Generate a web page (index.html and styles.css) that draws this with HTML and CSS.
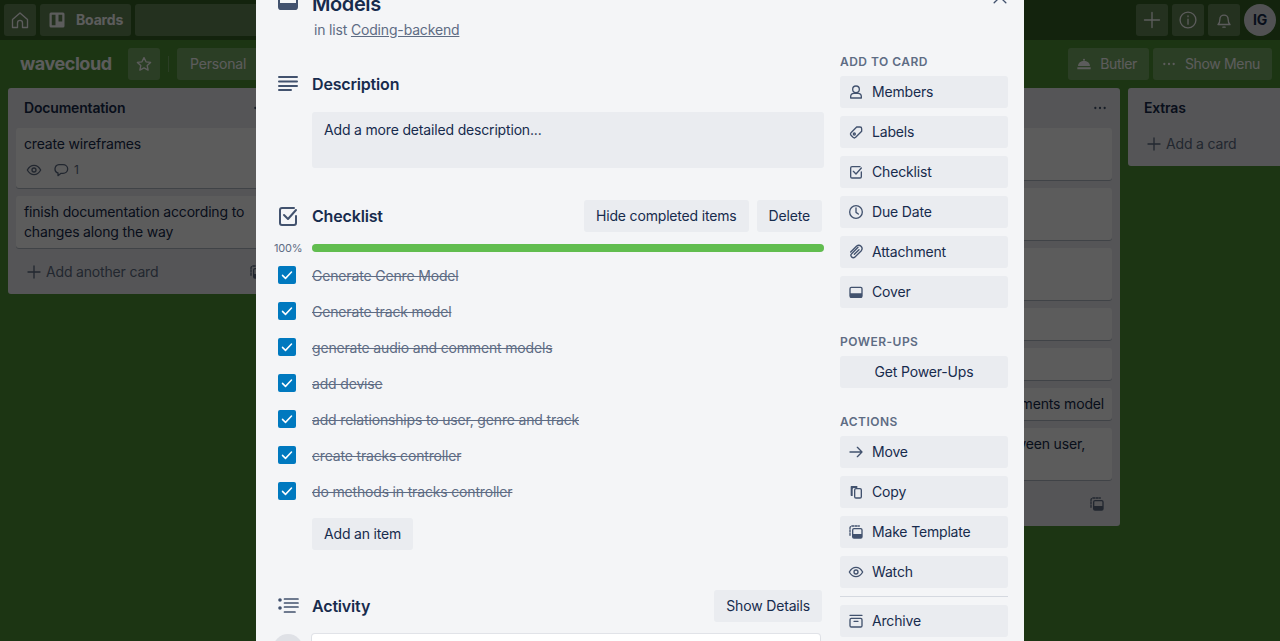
FILE: index.html
```html
<!DOCTYPE html>
<html lang="en">
<head>
    <meta charset="UTF-8">
    <title>Models on wavecloud</title>
    <link rel="stylesheet" href="styles.css">
</head>
<body>
    <svg class="sprite" xmlns="http://www.w3.org/2000/svg">
        <symbol id="i-home" viewBox="0 0 24 24"><path d="M3 11.500 12 3.500l9 8V21h-6v-5.500a3 3 0 0 0-6 0V21H3z"/></symbol>
        <symbol id="i-boards" viewBox="0 0 24 24"><path class="solid" fill-rule="evenodd" d="M4 2h16a2 2 0 0 1 2 2v16a2 2 0 0 1-2 2H4a2 2 0 0 1-2-2V4a2 2 0 0 1 2-2zm1 3v14h5V5zm9 0v9h5V5z"/></symbol>
        <symbol id="i-star" viewBox="0 0 24 24"><path d="M12 3.500l2.700 5.600 6.100.8-4.500 4.200 1.200 6.100-5.500-3-5.500 3 1.200-6.100-4.500-4.200 6.100-.8z"/></symbol>
        <symbol id="i-plus" viewBox="0 0 24 24"><path d="M12 3v18M3 12h18"/></symbol>
        <symbol id="i-info" viewBox="0 0 24 24"><circle cx="12" cy="12" r="9.500"/><path d="M12 11v6M12 7v1"/></symbol>
        <symbol id="i-bell" viewBox="0 0 24 24"><path d="M4 18c2-1.500 2.500-3 2.500-7a5.500 5.500 0 0 1 11 0c0 4 .5 5.500 2.500 7zM10.500 21.500h3"/></symbol>
        <symbol id="i-butler" viewBox="0 0 24 24"><path class="solid" d="M3 15a9 8 0 0 1 18 0zM2 17h20v3H2z"/><circle class="solid" cx="12" cy="5.500" r="1.500"/></symbol>
        <symbol id="i-dots" viewBox="0 0 24 24"><circle class="solid" cx="5" cy="12" r="1.700"/><circle class="solid" cx="12" cy="12" r="1.700"/><circle class="solid" cx="19" cy="12" r="1.700"/></symbol>
        <symbol id="i-eye" viewBox="0 0 24 24"><path d="M2 12c2.500-4.500 6-7 10-7s7.500 2.500 10 7c-2.500 4.500-6 7-10 7s-7.500-2.500-10-7z"/><circle cx="12" cy="12" r="3"/></symbol>
        <symbol id="i-comment" viewBox="0 0 24 24"><path d="M9 4h6a7 6.500 0 0 1 0 13h-3l-4.500 3.500V16.500A7 6.500 0 0 1 9 4z"/></symbol>
        <symbol id="i-template" viewBox="0 0 24 24"><path d="M3 17V6a3 3 0 0 1 3-3h11" stroke-dasharray="3 2"/><rect x="7" y="7" width="14" height="14" rx="2"/><path class="solid" d="M7 15h14v4a2 2 0 0 1-2 2H9a2 2 0 0 1-2-2z"/></symbol>
        <symbol id="i-cover" viewBox="0 0 24 24"><rect x="3" y="5" width="18" height="15" rx="2"/><path class="solid" d="M3 14h18v5a2 2 0 0 1-2 2H5a2 2 0 0 1-2-2z"/></symbol>
        <symbol id="i-lines" viewBox="0 0 24 24"><path d="M3 5h18M3 9.500h18M3 14h18M3 18h12"/></symbol>
        <symbol id="i-check" viewBox="0 0 24 24"><path d="M20 12v7a2 2 0 0 1-2 2H6a2 2 0 0 1-2-2V6a2 2 0 0 1 2-2h12"/><path d="M8 11l4 4 8-9"/></symbol>
        <symbol id="i-activity" viewBox="0 0 24 24"><circle class="solid" cx="4" cy="6" r="1.800"/><circle class="solid" cx="4" cy="14" r="1.800"/><path stroke-width="1.700" d="M8.500 5h13.500M8.500 9h13.500M8.500 13h13.500M8.500 18h10.500"/></symbol>
        <symbol id="i-member" viewBox="0 0 24 24"><circle cx="12" cy="8" r="5"/><path d="M4 21v-2a5 5 0 0 1 5-5h6a5 5 0 0 1 5 5v2z"/></symbol>
        <symbol id="i-label" viewBox="0 0 24 24"><path d="M13 4.500h5a2.500 2.500 0 0 1 2.500 2.500v4l-9 9a3 3 0 0 1-4 0L4.500 17a3 3 0 0 1 0-4z"/><circle cx="9.500" cy="15" r="1.500"/></symbol>
        <symbol id="i-clock" viewBox="0 0 24 24"><circle cx="12" cy="12" r="9.500"/><path d="M12 6v6.500l3.500 2.500"/></symbol>
        <symbol id="i-clip" viewBox="0 0 24 24"><path d="M15 5l-9.500 9.500a3.500 3.500 0 0 0 5 5L20 10a5 5 0 0 0-7-7L4 12M16.500 8.500l-7 7"/></symbol>
        <symbol id="i-arrow" viewBox="0 0 24 24"><path d="M3 12h18M14 5l7 7-7 7"/></symbol>
        <symbol id="i-copy" viewBox="0 0 24 24"><rect x="10" y="7" width="10" height="14" rx="2"/><path class="solid" d="M5 3h9v3H9a2 2 0 0 0-2 2v10H5a1 1 0 0 1-1-1V4a1 1 0 0 1 1-1z"/></symbol>
        <symbol id="i-archive" viewBox="0 0 24 24"><path d="M3 3.500h18"/><rect x="3" y="8" width="18" height="13" rx="2"/><path d="M9 12.500h6"/></symbol>
        <symbol id="i-close" viewBox="0 0 24 24"><path d="M5 5l14 14M19 5 5 19"/></symbol>
    </svg>

    <div class="board-page">
        <header class="topbar">
            <a class="bar-btn square"><svg class="icon big"><use href="#i-home"/></svg></a>
            <a class="bar-btn boards-btn"><svg class="icon mid"><use href="#i-boards"/></svg><span>Boards</span></a>
            <div class="bar-btn search-box"></div>
            <div class="topbar-right">
                <a class="bar-btn square"><svg class="icon big"><use href="#i-plus"/></svg></a>
                <a class="bar-btn square"><svg class="icon big"><use href="#i-info"/></svg></a>
                <a class="bar-btn square"><svg class="icon mid"><use href="#i-bell"/></svg></a>
                <div class="user-avatar">IG</div>
            </div>
        </header>

        <div class="board-head">
            <h1 class="board-name">wavecloud</h1>
            <a class="bar-btn square"><svg class="icon mid"><use href="#i-star"/></svg></a>
            <span class="head-divider"></span>
            <a class="bar-btn personal-btn">Personal</a>
            <div class="board-head-right">
                <a class="bar-btn text-btn"><svg class="icon"><use href="#i-butler"/></svg><span>Butler</span></a>
                <a class="bar-btn text-btn"><svg class="icon"><use href="#i-dots"/></svg><span>Show Menu</span></a>
            </div>
        </div>

        <div class="lists">
            <section class="list">
                <div class="list-head">
                    <h2>Documentation</h2>
                    <svg class="icon"><use href="#i-dots"/></svg>
                </div>
                <div class="card">
                    create wireframes
                    <div class="badges">
                        <svg class="icon"><use href="#i-eye"/></svg>
                        <svg class="icon"><use href="#i-comment"/></svg><span>1</span>
                    </div>
                </div>
                <div class="card">finish documentation according to changes along the way</div>
                <div class="add-row">
                    <svg class="icon"><use href="#i-plus"/></svg><span>Add another card</span>
                    <svg class="icon template-icon"><use href="#i-template"/></svg>
                </div>
            </section>

            <section class="list"></section>
            <section class="list"></section>

            <section class="list">
                <div class="list-head">
                    <h2></h2>
                    <svg class="icon"><use href="#i-dots"/></svg>
                </div>
                <div class="card tall"></div>
                <div class="card tall"></div>
                <div class="card tall"></div>
                <div class="card"></div>
                <div class="card"></div>
                <div class="card peek">ments model</div>
                <div class="card tall peek short">ween user,</div>
                <div class="add-row">
                    <svg class="icon template-icon"><use href="#i-template"/></svg>
                </div>
            </section>

            <section class="list">
                <div class="list-head"><h2>Extras</h2></div>
                <div class="add-row">
                    <svg class="icon"><use href="#i-plus"/></svg><span>Add a card</span>
                </div>
            </section>
        </div>
    </div>

    <div class="overlay">
        <div class="card-window">
            <a class="window-close"><svg class="icon big"><use href="#i-close"/></svg></a>

            <div class="window-main">
                <div class="section-head title-head">
                    <svg class="section-icon title-icon"><use href="#i-cover"/></svg>
                    <h2 class="card-title">Models</h2>
                </div>
                <p class="in-list">in list <a>Coding-backend</a></p>

                <div class="section-head desc-head">
                    <svg class="section-icon"><use href="#i-lines"/></svg>
                    <h3>Description</h3>
                </div>
                <div class="desc-box">Add a more detailed description...</div>

                <div class="section-head checklist-head">
                    <svg class="section-icon"><use href="#i-check"/></svg>
                    <h3>Checklist</h3>
                    <div class="head-actions">
                        <a class="btn">Hide completed items</a>
                        <a class="btn">Delete</a>
                    </div>
                </div>
                <div class="progress">
                    <span class="percent">100%</span>
                    <div class="progress-track"><div class="progress-fill"></div></div>
                </div>
                <ul class="check-items">
                    <li><span class="checkbox"><svg viewBox="0 0 24 24"><path d="M6 12.500l4 4 8-8.500"/></svg></span><span class="item-text">Generate Genre Model</span></li>
                    <li><span class="checkbox"><svg viewBox="0 0 24 24"><path d="M6 12.500l4 4 8-8.500"/></svg></span><span class="item-text">Generate track model</span></li>
                    <li><span class="checkbox"><svg viewBox="0 0 24 24"><path d="M6 12.500l4 4 8-8.500"/></svg></span><span class="item-text">generate audio and comment models</span></li>
                    <li><span class="checkbox"><svg viewBox="0 0 24 24"><path d="M6 12.500l4 4 8-8.500"/></svg></span><span class="item-text">add devise</span></li>
                    <li><span class="checkbox"><svg viewBox="0 0 24 24"><path d="M6 12.500l4 4 8-8.500"/></svg></span><span class="item-text">add relationships to user, genre and track</span></li>
                    <li><span class="checkbox"><svg viewBox="0 0 24 24"><path d="M6 12.500l4 4 8-8.500"/></svg></span><span class="item-text">create tracks controller</span></li>
                    <li><span class="checkbox"><svg viewBox="0 0 24 24"><path d="M6 12.500l4 4 8-8.500"/></svg></span><span class="item-text">do methods in tracks controller</span></li>
                </ul>
                <a class="btn add-item">Add an item</a>

                <div class="section-head activity-head">
                    <svg class="section-icon"><use href="#i-activity"/></svg>
                    <h3>Activity</h3>
                    <div class="head-actions">
                        <a class="btn">Show Details</a>
                    </div>
                </div>
                <div class="comment-row">
                    <div class="comment-avatar"></div>
                    <div class="comment-box"></div>
                </div>
            </div>

            <aside class="sidebar">
                <h4>Add to card</h4>
                <a class="side-btn"><svg class="icon"><use href="#i-member"/></svg>Members</a>
                <a class="side-btn"><svg class="icon"><use href="#i-label"/></svg>Labels</a>
                <a class="side-btn"><svg class="icon"><use href="#i-check"/></svg>Checklist</a>
                <a class="side-btn"><svg class="icon"><use href="#i-clock"/></svg>Due Date</a>
                <a class="side-btn"><svg class="icon"><use href="#i-clip"/></svg>Attachment</a>
                <a class="side-btn"><svg class="icon"><use href="#i-cover"/></svg>Cover</a>

                <h4 class="side-group">Power-Ups</h4>
                <a class="side-btn centered">Get Power-Ups</a>

                <h4 class="side-group">Actions</h4>
                <a class="side-btn"><svg class="icon"><use href="#i-arrow"/></svg>Move</a>
                <a class="side-btn"><svg class="icon"><use href="#i-copy"/></svg>Copy</a>
                <a class="side-btn"><svg class="icon"><use href="#i-template"/></svg>Make Template</a>
                <a class="side-btn"><svg class="icon"><use href="#i-eye"/></svg>Watch</a>
                <hr class="side-rule">
                <a class="side-btn"><svg class="icon"><use href="#i-archive"/></svg>Archive</a>
            </aside>
        </div>
    </div>
</body>
</html>
```

FILE: styles.css
```css
* {
    box-sizing: border-box;
}
html, body {
    height: 100%;
}
body {
    margin: 0;
    overflow: hidden;
    background-color: #4f9236;
    color: #172b4d;
    font-family: Inter, "Noto Sans", sans-serif;
    font-size: 14px;
    line-height: 20px;
    letter-spacing: -0.17px;
}
h1, h2, h3, h4, p, ul {
    margin: 0;
    padding: 0;
}
.sprite {
    display: none;
}
.icon, .section-icon {
    width: 16px;
    height: 16px;
    flex: none;
    fill: none;
    stroke: currentColor;
    stroke-width: 2;
    stroke-linecap: round;
    stroke-linejoin: round;
}
.icon.mid {
    width: 18px;
    height: 18px;
    stroke-width: 1.8;
}
.icon.big {
    width: 20px;
    height: 20px;
    stroke-width: 1.600;
}
.section-icon {
    width: 24px;
    height: 24px;
    margin: 0 12px 0 20px;
    color: #42526e;
}
symbol .solid {
    fill: currentColor;
    stroke: none;
}

/* board behind the overlay */
.board-page {
    height: 100%;
    color: #fff;
}
.topbar {
    display: flex;
    gap: 4px;
    height: 40px;
    padding: 4px;
    background-color: rgba(0, 0, 0, 0.32);
}
.bar-btn {
    display: flex;
    align-items: center;
    height: 32px;
    border-radius: 3px;
    background-color: rgba(255, 255, 255, 0.24);
    color: #fff;
}
.bar-btn.square {
    justify-content: center;
    width: 32px;
}
.boards-btn {
    gap: 10px;
    width: 91px;
    padding-left: 8px;
    font-weight: 700;
}
.search-box {
    width: 200px;
}
.topbar-right {
    display: flex;
    gap: 4px;
    margin-left: auto;
}
.user-avatar {
    display: flex;
    align-items: center;
    justify-content: center;
    width: 32px;
    height: 32px;
    border-radius: 50%;
    background-color: #dfe1e6;
    color: #172b4d;
    font-weight: 700;
}
.board-head {
    display: flex;
    align-items: center;
    height: 48px;
    padding: 0 8px 0 20px;
}
.board-name {
    width: 108px;
    font-size: 18px;
    line-height: 32px;
    font-weight: 700;
    letter-spacing: -0.45px;
}
.head-divider {
    width: 1px;
    height: 16px;
    margin: 0 8px;
    background-color: rgba(255, 255, 255, 0.24);
}
.personal-btn {
    width: 100px;
    padding-left: 13px;
}
.board-head-right {
    display: flex;
    gap: 4px;
    margin-left: auto;
}
.text-btn {
    gap: 8px;
    padding: 0 12px 0 8px;
    letter-spacing: -0.35px;
}

.lists {
    display: flex;
    align-items: flex-start;
    gap: 8px;
    padding-left: 8px;
    overflow: hidden;
}
.list {
    flex: none;
    width: 272px;
    padding: 0 8px 6px;
    border-radius: 3px;
    background-color: #ebecf0;
    color: #172b4d;
}
.list-head {
    display: flex;
    align-items: center;
    justify-content: space-between;
    height: 40px;
    padding: 0 4px 0 8px;
}
.list-head h2 {
    font-size: 14px;
    font-weight: 600;
}
.list-head .icon {
    color: #42526e;
}
.card {
    margin-bottom: 8px;
    padding: 6px 8px;
    border-radius: 3px;
    background-color: #fff;
    box-shadow: 0 1px 0 rgba(9, 30, 66, 0.25);
}
.card.tall {
    min-height: 52px;
}
.card:empty {
    min-height: 32px;
}
.card.tall:empty {
    min-height: 52px;
}
/* only the end of these titles shows past the open card */
.card.peek {
    text-align: right;
}
.card.peek.short {
    padding-right: 27px;
}
.badges {
    display: flex;
    align-items: center;
    height: 24px;
    margin-top: 4px;
    color: #5e6c84;
    font-size: 12px;
}
.badges .icon {
    margin: 0 2px;
}
.badges .icon:first-child {
    margin-right: 9px;
}
.badges span {
    margin-left: 3px;
}
.add-row {
    display: flex;
    align-items: center;
    gap: 4px;
    height: 32px;
    padding: 0 7px 0 10px;
    color: #5e6c84;
}
.template-icon {
    margin-left: auto;
}

/* dark layer and the open card */
.overlay {
    position: fixed;
    inset: 0;
    overflow: hidden;
    background-color: rgba(0, 0, 0, 0.64);
}
.card-window {
    position: relative;
    display: flex;
    width: 768px;
    min-height: 700px;
    margin: -7px auto 0;
    background-color: #f4f5f7;
}
.window-close {
    position: absolute;
    top: -6px;
    right: 14px;
    color: #42526e;
}
.window-main {
    width: 568px;
    flex: none;
}
.section-head {
    display: flex;
    align-items: center;
}
.section-head h3 {
    font-size: 16px;
    line-height: 24px;
    font-weight: 600;
}
.title-head {
    margin-top: -1px;
}
.title-icon {
    margin-top: -6px;
}
.card-title {
    font-size: 20px;
    line-height: 24px;
    font-weight: 600;
    letter-spacing: -0.4px;
}
.in-list {
    margin: 4px 0 0 58px;
    color: #5e6c84;
}
.in-list a {
    text-decoration: underline;
}
.desc-head {
    margin-top: 32px;
}
.desc-box {
    height: 56px;
    margin: 16px 0 0 56px;
    padding: 8px 12px;
    border-radius: 3px;
    background-color: #eaecf0;
}
.checklist-head {
    margin-top: 32px;
    height: 32px;
}
.head-actions {
    display: flex;
    gap: 8px;
    margin-left: auto;
    margin-right: 2px;
}
.btn {
    display: block;
    width: fit-content;
    padding: 6px 12px;
    border-radius: 3px;
    background-color: #eaecf0;
}
.progress {
    display: flex;
    align-items: center;
    height: 8px;
    margin-top: 12px;
}
.percent {
    width: 28px;
    margin: 0 10px 0 18px;
    color: #5e6c84;
    font-size: 11px;
    text-align: center;
}
.progress-track {
    flex: 1;
    height: 8px;
    border-radius: 4px;
    background-color: #dfe1e6;
}
.progress-fill {
    height: 100%;
    border-radius: 4px;
    background-color: #61bd4f;
}
.check-items {
    margin-top: 6px;
    list-style: none;
}
.check-items li {
    display: flex;
    align-items: center;
    height: 36px;
}
.checkbox {
    width: 18px;
    height: 18px;
    margin: -2px 16px 0 22px;
    border-radius: 2px;
    background-color: #0079bf;
}
.checkbox svg {
    display: block;
    width: 18px;
    height: 18px;
    fill: none;
    stroke: #fff;
    stroke-width: 2;
    stroke-linecap: round;
    stroke-linejoin: round;
}
.item-text {
    color: #5e6c84;
    text-decoration: line-through;
}
.add-item {
    margin: 8px 0 0 56px;
}
.activity-head {
    margin-top: 40px;
    height: 32px;
}
.comment-row {
    display: flex;
    gap: 8px;
    margin: 12px 0 0 17px;
}
.comment-avatar {
    width: 30px;
    height: 30px;
    border-radius: 50%;
    background-color: #dfe1e6;
}
.comment-box {
    width: 508px;
    height: 60px;
    margin-left: 1px;
    border-radius: 3px;
    background-color: #fff;
    box-shadow: 0 1px 2px -1px rgba(9, 30, 66, 0.25), 0 0 0 1px rgba(9, 30, 66, 0.08);
}
.sidebar {
    width: 168px;
    margin-left: 16px;
    padding-top: 61px;
}
.sidebar h4 {
    margin-bottom: 6px;
    color: #5e6c84;
    font-size: 12px;
    line-height: 16px;
    font-weight: 600;
    letter-spacing: 0.04em;
    text-transform: uppercase;
}
.sidebar .side-group {
    margin-top: 26px;
}
.side-btn {
    display: flex;
    align-items: center;
    gap: 8px;
    height: 32px;
    margin-bottom: 8px;
    padding-left: 8px;
    border-radius: 3px;
    background-color: #eaecf0;
}
.side-btn .icon {
    color: #42526e;
}
.side-btn.centered {
    justify-content: center;
    padding-left: 0;
}
.side-rule {
    height: 1px;
    margin: 0 0 8px;
    border: none;
    background-color: rgba(9, 30, 66, 0.13);
}
```
